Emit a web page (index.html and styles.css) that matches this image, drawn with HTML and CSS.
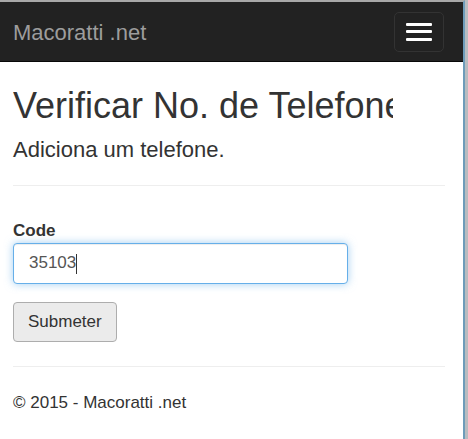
FILE: index.html
```html
<!DOCTYPE html>
<html lang="pt">
<head>
  <meta charset="UTF-8" />
  <meta name="viewport" content="width=device-width, initial-scale=1.0"/>
  <title>Verificar No. de Telefone - Macoratti .net</title>
  <link rel="stylesheet" href="styles.css">
</head>
<body>

<div class="window">
  <div class="navbar">
    <a class="brand" href="#">Macoratti .net</a>
    <button class="toggle" type="button">
      <span class="bar"></span>
      <span class="bar"></span>
      <span class="bar"></span>
    </button>
  </div>

  <div class="body-content">
    <div class="title-wrap">
      <h2>Verificar No. de Telefone</h2>
    </div>
    <h4>Adiciona um telefone.</h4>
    <hr />

    <form class="verify-form">
      <label for="code">Code</label>
      <div class="field">
        <input id="code" class="form-control" type="text" value="35103" autofocus>
        <span class="caret"></span>
      </div>
      <button class="btn" type="submit">Submeter</button>
    </form>

    <hr />
    <footer>
      <p>&copy; 2015 - Macoratti .net</p>
    </footer>
  </div>
</div>

</body>
</html>
```

FILE: styles.css
```css
html, body {
  height: 100%;
}

body {
  margin: 0;
  background: #b8bcc0;
  color: #333;
  font-family: "Liberation Sans", Arial, sans-serif;
  font-size: 17px;
}

.window {
  box-sizing: border-box;
  width: 465px;
  min-height: 100%;
  background: #fff;
  border-top: 2px solid #a8a8a8;
  border-right: 2px solid #6e9cba;
}

/* top bar */
.navbar {
  display: flex;
  justify-content: space-between;
  align-items: center;
  height: 59px;
  padding: 0 19px 0 13px;
  background: #222;
  border-bottom: 1px solid #080808;
}

.brand {
  color: #9d9d9d;
  font-size: 22px;
  text-decoration: none;
  padding-top: 2px;
}

.toggle {
  display: flex;
  flex-direction: column;
  justify-content: center;
  align-items: center;
  gap: 4.5px;
  width: 50px;
  height: 40px;
  padding: 0;
  background: transparent;
  border: 1px solid #333;
  border-radius: 5px;
  cursor: pointer;
}

.toggle .bar {
  display: block;
  width: 26px;
  height: 3px;
  background: #fff;
  border-radius: 1px;
}

/* page */
.body-content {
  padding: 0 18px 0 13px;
}

/* the heading is cut by its column, as on the original page */
.title-wrap {
  width: 380px;
  overflow: hidden;
}

h2 {
  margin: 24px 0 0;
  font-size: 36px;
  font-weight: normal;
  line-height: 1.1;
  white-space: nowrap;
}

h4 {
  margin: 12px 0 0;
  font-size: 22px;
  font-weight: normal;
  line-height: 1.1;
}

hr {
  margin: 23px 0 0;
  border: 0;
  border-top: 1px solid #eee;
}

.verify-form {
  padding-top: 33px;
}

.verify-form label {
  display: block;
  font-weight: bold;
  line-height: 24px;
}

.field {
  position: relative;
  width: 335px;
}

.form-control {
  display: block;
  box-sizing: border-box;
  width: 335px;
  height: 41px;
  margin: 0;
  padding: 0 15px;
  font-family: inherit;
  font-size: 17px;
  color: #555;
  background: #fff;
  border: 1px solid #66afe9;
  border-radius: 4px;
  outline: 0;
  caret-color: transparent;
  box-shadow: inset 0 1px 1px rgba(0, 0, 0, .075), 0 0 8px rgba(102, 175, 233, .6);
}

/* text cursor drawn after the typed value */
.field .caret {
  position: absolute;
  left: 63px;
  top: 11px;
  width: 1px;
  height: 20px;
  background: #333;
}

.btn {
  display: block;
  box-sizing: border-box;
  height: 40px;
  margin: 18px 0 24px;
  padding: 0 14px;
  font-family: inherit;
  font-size: 17px;
  color: #333;
  background: #ebebeb;
  border: 1px solid #adadad;
  border-radius: 4px;
  cursor: pointer;
}

footer p {
  margin: 24px 0 0;
  line-height: 24px;
}
```
